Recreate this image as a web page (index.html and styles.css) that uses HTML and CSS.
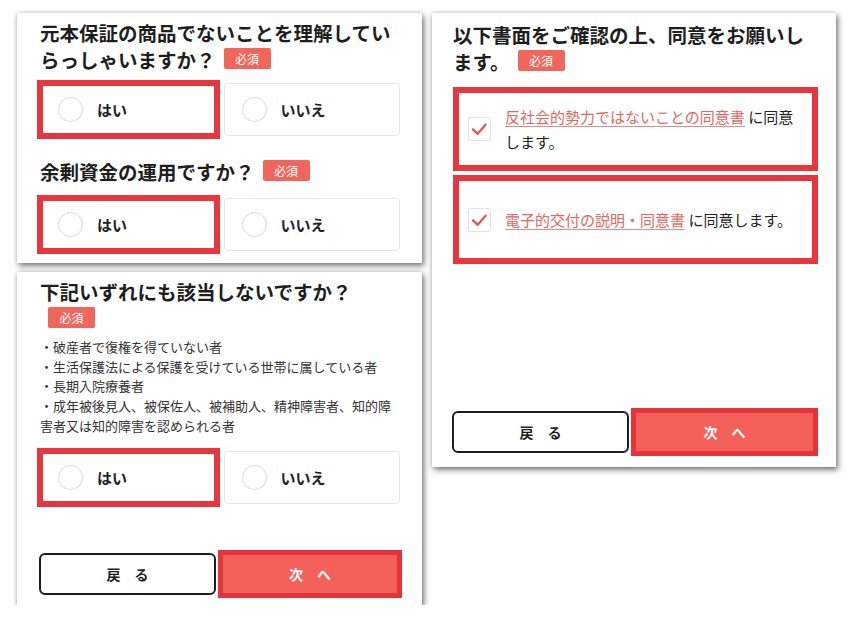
FILE: index.html
```html
<!DOCTYPE html>
<html lang="ja">
<head>
<meta charset="utf-8">
<title>確認画面</title>
<link rel="stylesheet" href="styles.css">
</head>
<body>
<main class="sheet">
  <div class="col">
    <section class="panel panel-a">
      <h2 class="q-title">元本保証の商品でないことを理解していらっしゃいますか？<span class="badge">必須</span></h2>
      <div class="options">
        <label class="option marked"><span class="radio"></span>はい</label>
        <label class="option"><span class="radio"></span>いいえ</label>
      </div>
      <h2 class="q-title q-second">余剰資金の運用ですか？<span class="badge">必須</span></h2>
      <div class="options options-second">
        <label class="option marked"><span class="radio"></span>はい</label>
        <label class="option"><span class="radio"></span>いいえ</label>
      </div>
    </section>

    <section class="panel panel-b">
      <h2 class="q-title">下記いずれにも該当しないですか？<span class="badge">必須</span></h2>
      <ul class="notes">
        <li>・破産者で復権を得ていない者</li>
        <li>・生活保護法による保護を受けている世帯に属している者</li>
        <li>・長期入院療養者</li>
        <li>・成年被後見人、被保佐人、被補助人、精神障害者、知的障害者又は知的障害を認められる者</li>
      </ul>
      <div class="options options-notes">
        <label class="option marked"><span class="radio"></span>はい</label>
        <label class="option"><span class="radio"></span>いいえ</label>
      </div>
      <div class="actions">
        <button class="btn-back">戻　る</button>
        <button class="btn-next">次　へ</button>
      </div>
    </section>
  </div>

  <section class="panel panel-c">
    <h2 class="q-title">以下書面をご確認の上、同意をお願いします。<span class="badge">必須</span></h2>
    <label class="agree">
      <span class="check"><svg viewBox="0 0 24 24" width="22" height="22"><polyline points="4.5,12.5 10,17.5 19,7" fill="none" stroke="#e8504a" stroke-width="2.6" stroke-linecap="round" stroke-linejoin="round"/></svg></span>
      <span class="agree-text"><a class="doc-link">反社会的勢力ではないことの同意書</a> に同意します。</span>
    </label>
    <label class="agree agree-single">
      <span class="check"><svg viewBox="0 0 24 24" width="22" height="22"><polyline points="4.5,12.5 10,17.5 19,7" fill="none" stroke="#e8504a" stroke-width="2.6" stroke-linecap="round" stroke-linejoin="round"/></svg></span>
      <span class="agree-text"><a class="doc-link">電子的交付の説明・同意書</a> に同意します。</span>
    </label>
    <div class="actions">
      <button class="btn-back">戻　る</button>
      <button class="btn-next">次　へ</button>
    </div>
  </section>
</main>
</body>
</html>
```

FILE: styles.css
```css
html, body {
  margin: 0;
  padding: 0;
  background: #ffffff;
}

body {
  font-family: "Noto Sans CJK JP", "Noto Sans", sans-serif;
  color: #222222;
}

.sheet {
  display: flex;
  align-items: flex-start;
  gap: 10px;
  padding: 13px 0 0 17px;
}

.col {
  display: flex;
  flex-direction: column;
  gap: 9px;
}

.panel {
  box-sizing: border-box;
  background: #ffffff;
  display: flex;
  flex-direction: column;
  overflow: hidden;
  box-shadow: 2px 3px 6px rgba(0, 0, 0, 0.5), 0 0 4px rgba(0, 0, 0, 0.18);
}

.panel-a {
  width: 405px;
  height: 250px;
  padding: 6px 22px 0 23px;
}

.panel-b {
  width: 405px;
  height: 333px;
  padding: 6px 22px 7px 23px;
}

.panel-c {
  width: 404px;
  height: 454px;
  padding: 8px 18px 11px 21px;
}

.q-title {
  margin: 0;
  font-size: 19.5px;
  line-height: 27px;
  font-weight: 700;
  color: #1e1e1e;
}

.q-second {
  margin-top: 22px;
}

.badge {
  display: inline-block;
  margin-left: 8px;
  width: 47px;
  height: 21px;
  line-height: 21px;
  text-align: center;
  border-radius: 2px;
  background: #f0665b;
  color: #ffffff;
  font-size: 12px;
  font-weight: 400;
  vertical-align: 4px;
}

.options {
  display: grid;
  grid-template-columns: 1fr 1fr;
  gap: 7px;
  margin-top: 10px;
}

.options-second {
  margin-top: 13px;
}

.options-notes {
  margin-top: 15px;
}

.option {
  box-sizing: border-box;
  height: 53px;
  display: flex;
  align-items: center;
  gap: 14px;
  padding-left: 17px;
  border: 1px solid #e6e6e6;
  border-radius: 4px;
  font-size: 15px;
  font-weight: 700;
  color: #222222;
}

.option.marked {
  border-radius: 0;
  outline: 6px solid #e8363c;
  outline-offset: -3px;
}

.radio {
  box-sizing: border-box;
  width: 25px;
  height: 25px;
  border-radius: 50%;
  border: 1.5px solid #d9d9d9;
  background: #ffffff;
  flex: none;
}

.notes {
  list-style: none;
  margin: 5px 0 0;
  padding: 0;
  font-size: 13px;
  line-height: 19.7px;
  color: #333333;
}

.actions {
  margin-top: auto;
  margin-left: -1px;
  display: flex;
  align-items: center;
  gap: 2px;
}

.btn-back {
  box-sizing: border-box;
  flex: 0 0 177px;
  height: 42px;
  border: 2px solid #1e1e1e;
  border-radius: 6px;
  background: #ffffff;
  color: #1e1e1e;
  font-family: inherit;
  font-size: 14px;
  font-weight: 700;
  padding: 0;
}

.btn-next {
  box-sizing: border-box;
  flex: 1 1 auto;
  height: 48px;
  border: 5px solid #e63339;
  border-radius: 0;
  background: #f3615a;
  color: #ffffff;
  font-family: inherit;
  font-size: 14px;
  font-weight: 700;
  padding: 0;
}

.panel-b .actions {
  margin-right: -2px;
}

.agree {
  box-sizing: border-box;
  display: flex;
  align-items: center;
  gap: 14px;
  margin-top: 12px;
  padding: 11px 10px 11px 9px;
  border: 6px solid #e8363c;
}

.agree-single {
  margin-top: 4px;
  padding-top: 26px;
  padding-bottom: 26px;
}

.check {
  box-sizing: border-box;
  flex: none;
  width: 23px;
  height: 24px;
  border: 1px solid #e3e3e3;
  border-radius: 2px;
  display: flex;
  align-items: center;
  justify-content: center;
}

.agree-text {
  font-size: 15px;
  line-height: 25px;
  color: #222222;
}

.doc-link {
  color: #e5675e;
  text-decoration: underline;
  text-decoration-color: #e98a82;
  text-underline-offset: 3px;
}
```
